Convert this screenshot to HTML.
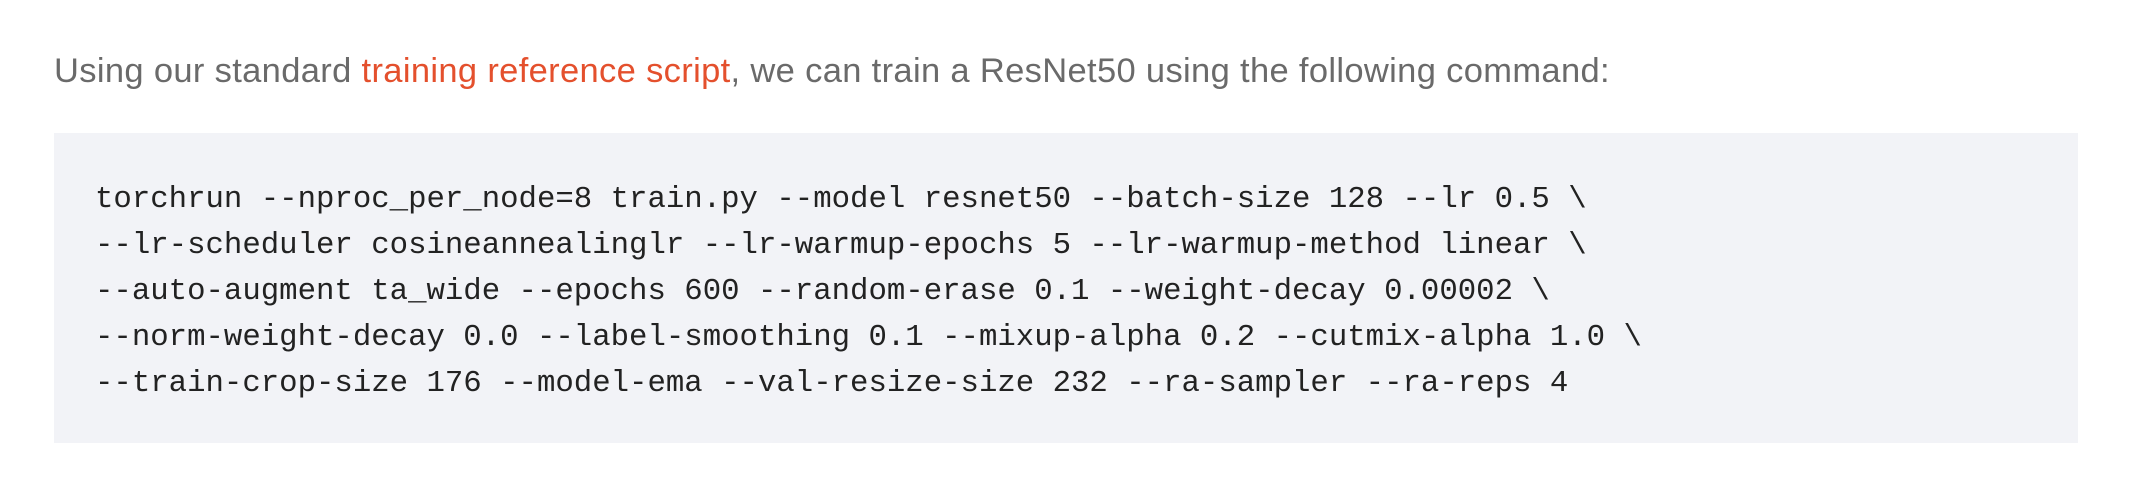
<!DOCTYPE html>
<html><head><meta charset="utf-8"><style>
html,body{margin:0;padding:0;background:#fff;width:2130px;height:504px;overflow:hidden}
p{position:absolute;left:54px;top:44px;margin:0;font-family:"Liberation Sans",sans-serif;font-size:34.5px;line-height:54px;color:#6a6a6a;letter-spacing:0.34px;white-space:nowrap}
p a{color:#e4502d;text-decoration:none}
.box{position:absolute;left:54px;top:133px;width:2024px;height:310px;background:#f2f3f7}
pre{position:absolute;left:95px;top:177px;margin:0;font-family:"Liberation Mono",monospace;font-size:30.7px;line-height:46px;color:#222}
</style></head><body>
<p>Using our standard <a>training reference script</a>, we can train a ResNet50 using the following command:</p>
<div class="box"></div>
<pre>torchrun --nproc_per_node=8 train.py --model resnet50 --batch-size 128 --lr 0.5 \
--lr-scheduler cosineannealinglr --lr-warmup-epochs 5 --lr-warmup-method linear \
--auto-augment ta_wide --epochs 600 --random-erase 0.1 --weight-decay 0.00002 \
--norm-weight-decay 0.0 --label-smoothing 0.1 --mixup-alpha 0.2 --cutmix-alpha 1.0 \
--train-crop-size 176 --model-ema --val-resize-size 232 --ra-sampler --ra-reps 4</pre>
</body></html>
